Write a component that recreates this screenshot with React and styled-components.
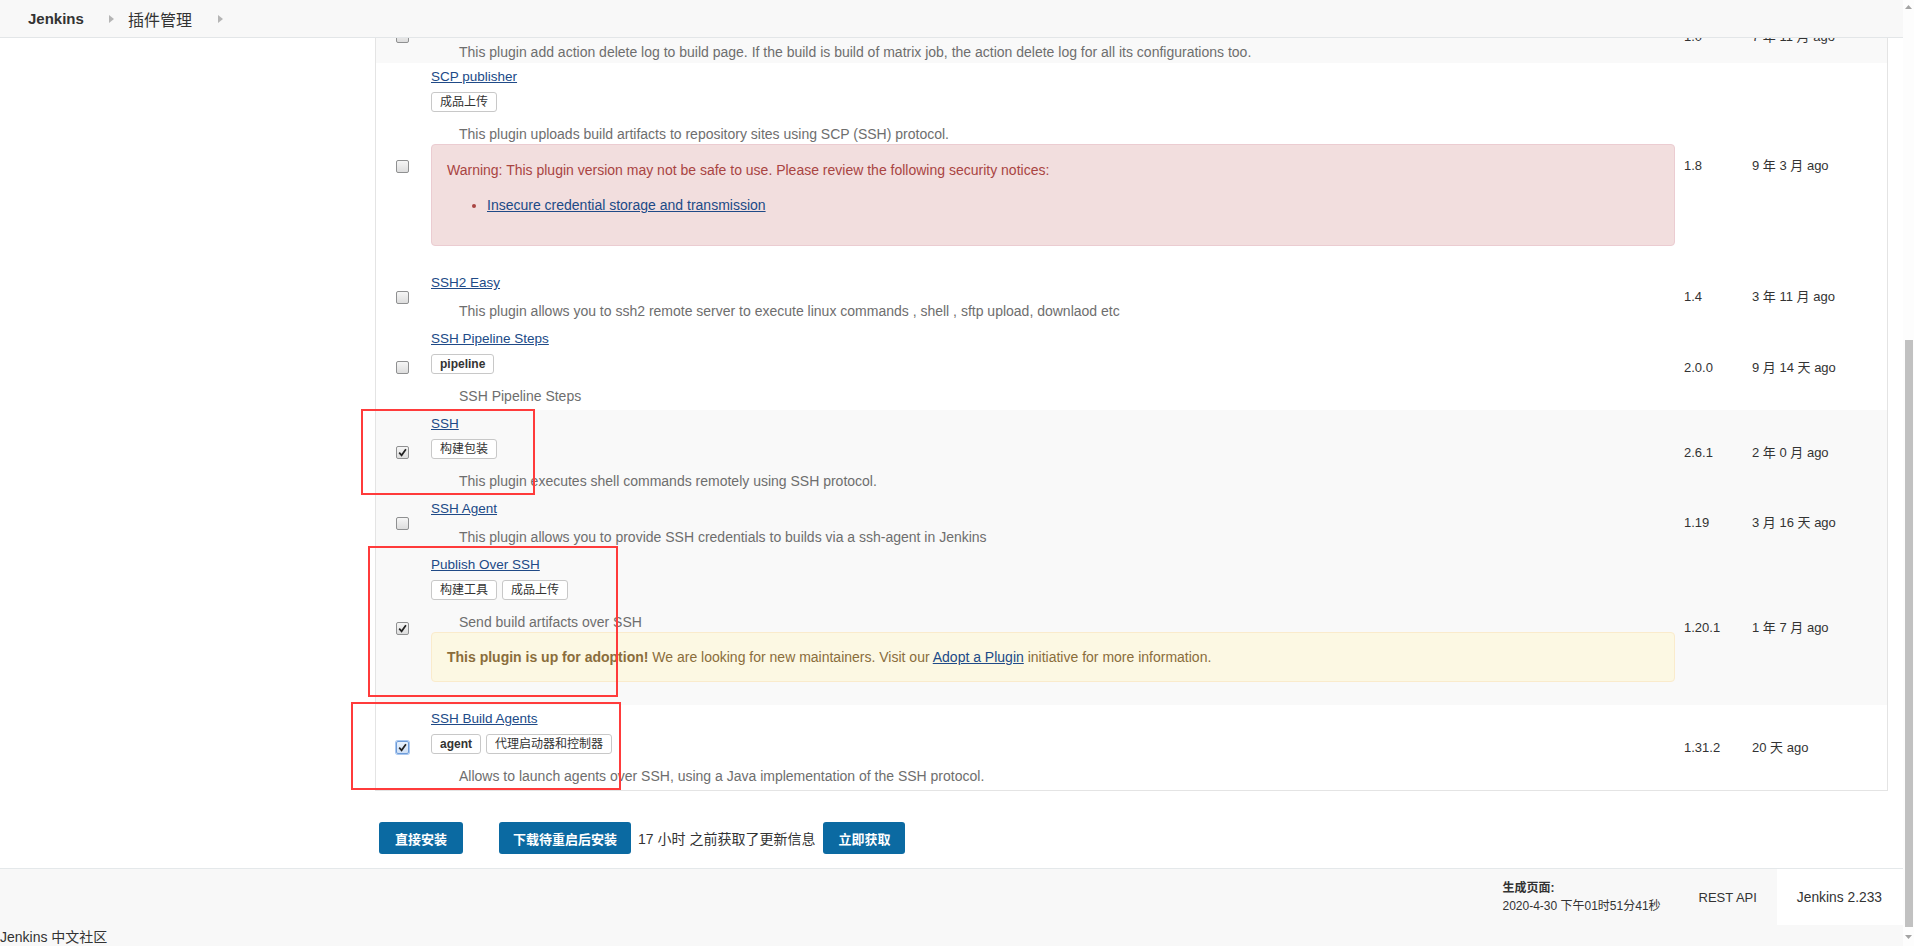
import React from "react";
import styled, { createGlobalStyle } from "styled-components";

const GlobalStyle = createGlobalStyle`
  html, body {
    margin: 0;
    padding: 0;
    height: 100%;
    overflow: hidden;
  }
  body {
    font-family: "Liberation Sans", "Noto Sans CJK SC", sans-serif;
    font-size: 13px;
    color: #333;
    background: #fff;
  }
  #root {
    height: 100%;
  }
`;

const plugins = [
  {
    name: "Delete log Plugin",
    desc: "This plugin add action delete log to build page. If the build is build of matrix job, the action delete log for all its configurations too.",
    version: "1.0",
    released: "7 年 11 月 ago",
    shaded: true,
    tight: true,
  },
  {
    name: "SCP publisher",
    tags: ["成品上传"],
    desc: "This plugin uploads build artifacts to repository sites using SCP (SSH) protocol.",
    version: "1.8",
    released: "9 年 3 月 ago",
    warning: true,
  },
  {
    name: "SSH2 Easy",
    desc: "This plugin allows you to ssh2 remote server to execute linux commands , shell , sftp upload, downlaod etc",
    version: "1.4",
    released: "3 年 11 月 ago",
  },
  {
    name: "SSH Pipeline Steps",
    tags: ["pipeline"],
    desc: "SSH Pipeline Steps",
    version: "2.0.0",
    released: "9 月 14 天 ago",
  },
  {
    name: "SSH",
    tags: ["构建包装"],
    desc: "This plugin executes shell commands remotely using SSH protocol.",
    version: "2.6.1",
    released: "2 年 0 月 ago",
    shaded: true,
    checked: true,
    mark: { top: -1, left: -15, w: 174, h: 86 },
  },
  {
    name: "SSH Agent",
    desc: "This plugin allows you to provide SSH credentials to builds via a ssh-agent in Jenkins",
    version: "1.19",
    released: "3 月 16 天 ago",
    shaded: true,
  },
  {
    name: "Publish Over SSH",
    tags: ["构建工具", "成品上传"],
    desc: "Send build artifacts over SSH",
    version: "1.20.1",
    released: "1 年 7 月 ago",
    shaded: true,
    checked: true,
    adoption: true,
    mark: { top: -5, left: -8, w: 250, h: 151 },
  },
  {
    name: "SSH Build Agents",
    tags: ["agent", "代理启动器和控制器"],
    desc: "Allows to launch agents over SSH, using a Java implementation of the SSH protocol.",
    version: "1.31.2",
    released: "20 天 ago",
    checked: true,
    focused: true,
    mark: { top: -3, left: -25, w: 270, h: 88 },
  },
];

const Shell = styled.div`
  display: flex;
  width: 1914px;
  height: 946px;
  overflow: hidden;
`;

const Page = styled.div`
  flex: 1;
  min-width: 0;
  display: flex;
  flex-direction: column;
`;

const Header = styled.header`
  height: 37px;
  flex-shrink: 0;
  display: flex;
  align-items: center;
  padding-left: 28px;
  background: #f8f8f8;
  border-bottom: 1px solid #e3e6e8;
`;

const Crumb = styled.span`
  font-size: ${(p) => (p.$home ? "15px" : "16px")};
  font-weight: ${(p) => (p.$home ? 700 : 400)};
  color: #333;
  margin-right: ${(p) => (p.$home ? "25px" : "26px")};
`;

const CrumbArrow = styled.svg`
  width: 5px;
  height: 8px;
  margin-right: 14px;
  margin-top: 1px;
`;

const Body = styled.div`
  flex: 1;
  min-height: 0;
  display: flex;
  overflow: hidden;
`;

const SidePanel = styled.aside`
  width: 375px;
  flex-shrink: 0;
`;

const Main = styled.main`
  flex: 1;
  min-width: 0;
  padding-right: 15px;
  display: flex;
  flex-direction: column;
`;

const Table = styled.div`
  border: 1px solid #e4e4e4;
  border-top: none;
  display: flex;
  flex-direction: column;
`;

const Clip = styled.div`
  height: 25px;
  overflow: hidden;
  display: flex;
  flex-direction: column;
  justify-content: flex-end;
  flex-shrink: 0;
`;

const Row = styled.div`
  position: relative;
  flex-shrink: 0;
  display: grid;
  grid-template-columns: 55px 1fr 68px 135px;
  align-items: center;
  background: ${(p) => (p.$shaded ? "#f9f9f9" : "#fff")};
`;

const CheckCell = styled.div`
  padding-left: 20px;
  display: flex;
  align-items: center;
`;

const Check = styled.span`
  width: 13px;
  height: 13px;
  box-sizing: border-box;
  border-radius: 2px;
  border: 1px solid ${(p) => (p.$focused ? "#6d9bd8" : "#8f9091")};
  background: ${(p) =>
    p.$focused ? "linear-gradient(#e8f1fc, #cfe0f5)" : "linear-gradient(#f6f6f6, #dddddd)"};
  box-shadow: ${(p) => (p.$focused ? "0 0 0 1px #a8c7f0" : "none")};
  display: flex;
  align-items: center;
  justify-content: center;
`;

const Details = styled.div`
  padding: 4px 9px ${(p) => (p.$tight ? "1px" : "4px")} 0;
`;

const NameLine = styled.div`
  line-height: 20px;
  font-size: 13.5px;
`;

const Link = styled.a`
  color: #204a87;
  text-decoration: underline;
  cursor: pointer;
`;

const Tags = styled.div`
  display: flex;
  gap: 5px;
  margin-top: 5px;
  padding-bottom: 4px;
`;

const Tag = styled.span`
  box-sizing: border-box;
  height: 20px;
  line-height: 18px;
  padding: 0 8px;
  font-size: 12px;
  font-weight: ${(p) => (p.$latin ? 700 : 400)};
  color: #333;
  background: #fff;
  border: 1px solid #c8c8c8;
  border-radius: 3px;
`;

const Excerpt = styled.div`
  margin-top: 8px;
  padding-left: 28px;
  font-size: 14px;
  line-height: 20px;
  color: #6e6e6e;
`;

const Alert = styled.div`
  margin-bottom: 19px;
  padding: ${(p) => (p.$tone === "danger" ? "15px" : "14px 15px")};
  font-size: 14px;
  line-height: 20px;
  border-radius: 4px;
  border: 1px solid ${(p) => (p.$tone === "danger" ? "#ebccd1" : "#faebcc")};
  background: ${(p) => (p.$tone === "danger" ? "#f2dede" : "#fcf8e3")};
  color: ${(p) => (p.$tone === "danger" ? "#a94442" : "#8a6d3b")};
`;

const AlertList = styled.ul`
  margin: 15px 0;
  padding-left: 40px;
`;

const Cell = styled.div`
  line-height: 20px;
  color: #333;
`;

const Mark = styled.div`
  position: absolute;
  top: ${(p) => p.$top}px;
  left: ${(p) => p.$left}px;
  width: ${(p) => p.$w}px;
  height: ${(p) => p.$h}px;
  box-sizing: border-box;
  border: 2px solid #ff3b3b;
  pointer-events: none;
`;

const ButtonBar = styled.div`
  margin-top: 31px;
  padding-left: 4px;
  display: flex;
  align-items: center;
`;

const Button = styled.button`
  height: 32px;
  padding: 0 ${(p) => p.$pad || 15}px;
  margin-right: ${(p) => p.$gap || 0}px;
  border: none;
  border-radius: 3px;
  background: #0b6aa2;
  color: #fff;
  font-family: inherit;
  font-size: 13px;
  font-weight: 700;
  cursor: pointer;
`;

const UpdateNote = styled.span`
  font-size: 14px;
  color: #333;
  margin: 0 8px 0 7px;
`;

const Footer = styled.footer`
  height: 77px;
  flex-shrink: 0;
  display: flex;
  justify-content: space-between;
  align-items: flex-start;
  background: #f8f8f8;
  border-top: 1px solid #e4e8ea;
`;

const Community = styled.span`
  align-self: flex-end;
  font-size: 14px;
  line-height: 16px;
  margin-bottom: 1px;
  color: #333;
`;

const FooterRight = styled.div`
  height: 56px;
  display: flex;
  align-items: center;
`;

const PageGen = styled.div`
  font-size: 12px;
  line-height: 18px;
  margin-right: 18px;
  color: #333;
`;

const PageGenLabel = styled.div`
  font-weight: 700;
`;

const FooterLink = styled.span`
  padding: 0 20px;
  font-size: 13px;
  color: #333;
`;

const VersionBox = styled.div`
  height: 100%;
  display: flex;
  align-items: center;
  padding: 0 21px 0 20px;
  background: #fff;
  font-size: 13.8px;
  color: #333;
`;

const ScrollTrack = styled.div`
  width: 11px;
  flex-shrink: 0;
  display: flex;
  flex-direction: column;
  align-items: center;
  background: #fdfdfd;
`;

const ScrollArrow = styled.div`
  height: ${(p) => p.$h}px;
  display: flex;
  align-items: center;
  justify-content: center;
`;

const ScrollGap = styled.div`
  height: ${(p) => p.$h}px;
`;

const Thumb = styled.div`
  width: 8px;
  height: ${(p) => p.$h}px;
  background: #c1c1c1;
`;

const Arrow = () => (
  <CrumbArrow viewBox="0 0 5 8">
    <polygon points="0,0 5,4 0,8" fill="#b5b5b5" />
  </CrumbArrow>
);

const CheckBox = ({ checked, focused }) => (
  <Check $focused={focused}>
    {checked && (
      <svg width="9" height="9" viewBox="0 0 9 9">
        <path d="M1.2 4.6 L3.6 7.3 L7.9 1.3" fill="none" stroke="#222" strokeWidth="1.7" />
      </svg>
    )}
  </Check>
);

const PluginRow = ({ p }) => (
  <Row $shaded={p.shaded}>
    <CheckCell>
      <CheckBox checked={p.checked} focused={p.focused} />
    </CheckCell>
    <Details $tight={p.tight}>
      <NameLine>
        <Link>{p.name}</Link>
      </NameLine>
      {p.tags && (
        <Tags>
          {p.tags.map((t) => (
            <Tag key={t} $latin={/^[a-z]+$/i.test(t)}>
              {t}
            </Tag>
          ))}
        </Tags>
      )}
      <Excerpt>{p.desc}</Excerpt>
      {p.warning && (
        <Alert $tone="danger">
          Warning: This plugin version may not be safe to use. Please review the following security notices:
          <AlertList>
            <li>
              <Link>Insecure credential storage and transmission</Link>
            </li>
          </AlertList>
        </Alert>
      )}
      {p.adoption && (
        <Alert $tone="adopt">
          <b>This plugin is up for adoption!</b> We are looking for new maintainers. Visit our{" "}
          <Link>Adopt a Plugin</Link> initiative for more information.
        </Alert>
      )}
    </Details>
    <Cell>{p.version}</Cell>
    <Cell>{p.released}</Cell>
    {p.mark && <Mark $top={p.mark.top} $left={p.mark.left} $w={p.mark.w} $h={p.mark.h} />}
  </Row>
);

export default function App() {
  const [first, ...rest] = plugins;
  return (
    <Shell>
      <GlobalStyle />
      <Page>
        <Header>
          <Crumb $home>Jenkins</Crumb>
          <Arrow />
          <Crumb>插件管理</Crumb>
          <Arrow />
        </Header>
        <Body>
          <SidePanel />
          <Main>
            <Table>
              <Clip>
                <PluginRow p={first} />
              </Clip>
              {rest.map((p) => (
                <PluginRow key={p.name} p={p} />
              ))}
            </Table>
            <ButtonBar>
              <Button $pad={16} $gap={36}>直接安装</Button>
              <Button $pad={14}>下载待重启后安装</Button>
              <UpdateNote>17 小时 之前获取了更新信息</UpdateNote>
              <Button>立即获取</Button>
            </ButtonBar>
          </Main>
        </Body>
        <Footer>
          <Community>Jenkins 中文社区</Community>
          <FooterRight>
            <PageGen>
              <PageGenLabel>生成页面:</PageGenLabel>
              <div>2020-4-30 下午01时51分41秒</div>
            </PageGen>
            <FooterLink>REST API</FooterLink>
            <VersionBox>Jenkins 2.233</VersionBox>
          </FooterRight>
        </Footer>
      </Page>
      <ScrollTrack>
        <ScrollArrow $h={14}>
          <svg width="7" height="4" viewBox="0 0 7 4">
            <polygon points="0,4 3.5,0 7,4" fill="#a3a3a3" />
          </svg>
        </ScrollArrow>
        <ScrollGap $h={326} />
        <Thumb $h={587} />
        <ScrollArrow $h={19}>
          <svg width="7" height="4" viewBox="0 0 7 4">
            <polygon points="0,0 3.5,4 7,0" fill="#a3a3a3" />
          </svg>
        </ScrollArrow>
      </ScrollTrack>
    </Shell>
  );
}
